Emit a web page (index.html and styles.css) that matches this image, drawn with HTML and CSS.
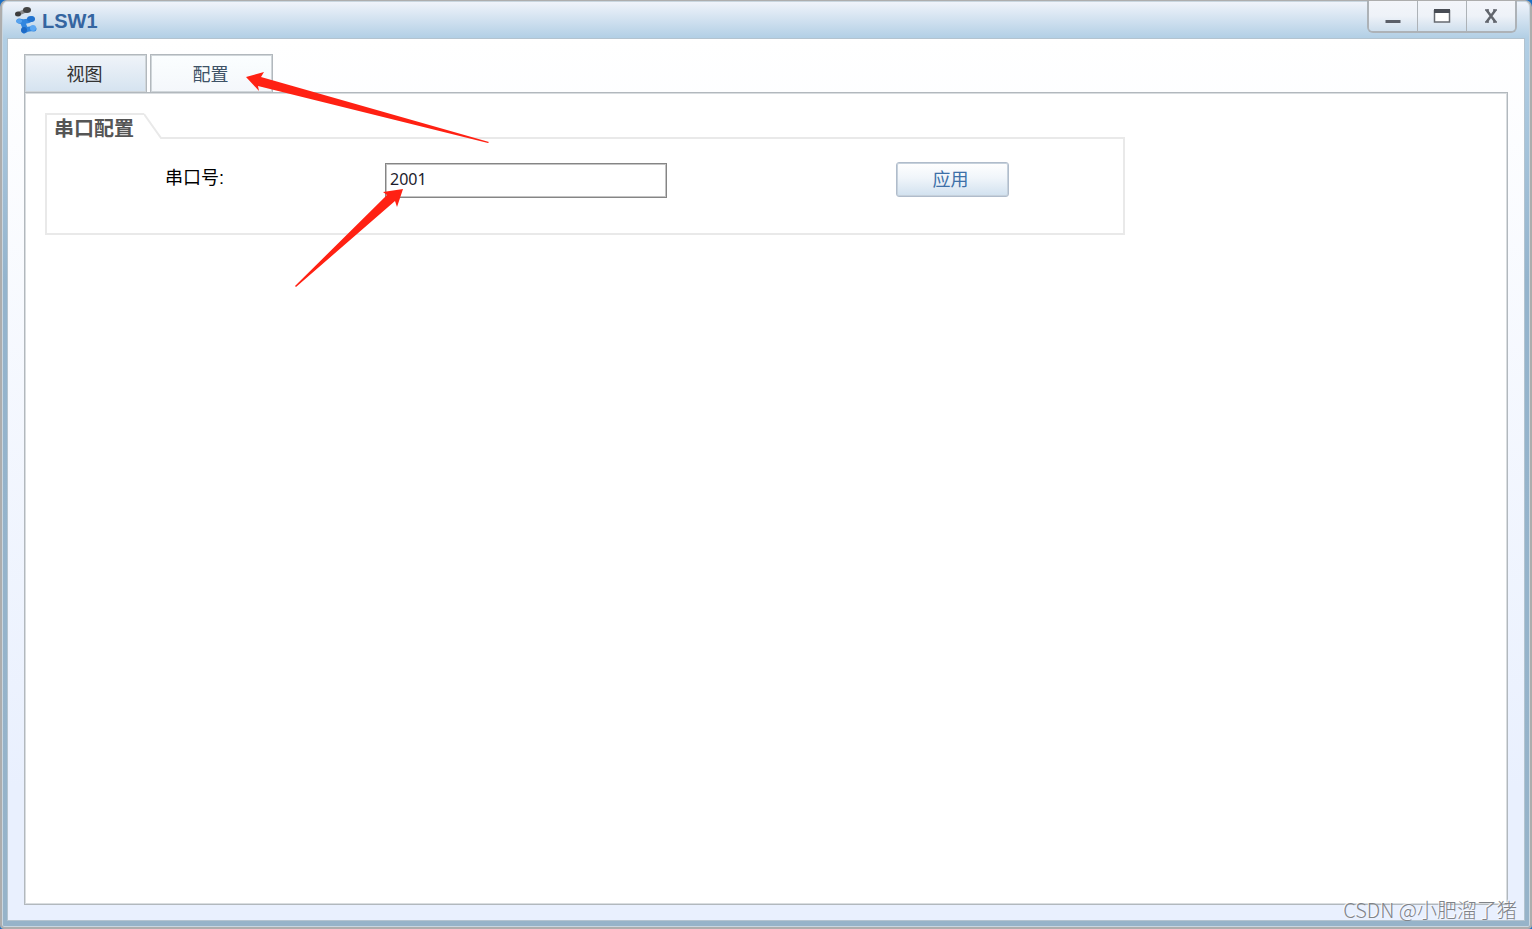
FILE: index.html
```html
<!DOCTYPE html>
<html lang="zh-CN">
<head>
    <meta charset="UTF-8">
    <meta name="viewport" content="width=device-width, initial-scale=1.0">
    <title>LSW1</title>
    <link rel="stylesheet" href="styles.css">
</head>
<body>
    <div class="window">
        <header class="titlebar">
            <svg class="logo" width="24" height="28" viewBox="0 0 24 28" aria-hidden="true">
                <path d="M3 8 L12 4" stroke="#8a8a8a" stroke-width="4"/>
                <ellipse cx="3" cy="8" rx="3" ry="2.500" fill="#3c3c3c"/>
                <ellipse cx="12" cy="4" rx="4" ry="3" fill="#444"/>
                <path d="M4 15 Q11 17 17 13 M8 17 L10 22 M9 25 Q13 22 19 23" fill="none" stroke="#3186df" stroke-width="5" stroke-linecap="round"/>
                <ellipse cx="16" cy="13" rx="4" ry="3" fill="#2273cf"/>
                <ellipse cx="4" cy="15" rx="3" ry="2" fill="#58a3ee"/>
                <circle cx="9" cy="24" r="3" fill="#1d6ac6"/>
                <ellipse cx="18" cy="22" rx="3" ry="3" fill="#5ca8f3"/>
            </svg>
            <h1>LSW1</h1>
            <div class="controls">
                <button type="button" aria-label="最小化">
                    <svg width="18" height="18" viewBox="0 0 18 18"><path d="M1.500 14.500h15" stroke="#5b5f68" stroke-width="3"/></svg>
                </button>
                <button type="button" aria-label="最大化">
                    <svg width="18" height="18" viewBox="0 0 18 18"><path d="M1.500 3v12h15V3" fill="#fff" stroke="#666a70" stroke-width="1.500"/><path d="M1 4h16" stroke="#484c54" stroke-width="4"/></svg>
                </button>
                <button type="button" aria-label="关闭">
                    <svg width="18" height="18" viewBox="0 0 18 18"><path d="M4.500 3l9 12M13.500 3l-9 12" stroke="#62666d" stroke-width="2.500"/><path d="M3 3h4M11 3h4M3 15h4M11 15h4" stroke="#62666d" stroke-width="1.500"/></svg>
                </button>
            </div>
        </header>

        <main class="content">
            <nav class="tabs">
                <button type="button" class="tab">视图</button>
                <button type="button" class="tab active">配置</button>
            </nav>
            <div class="panel">
                <section class="group">
                    <div class="group-head">
                        <h2>串口配置</h2>
                        <svg class="slope" width="18" height="26" viewBox="0 0 18 26"><path d="M0 1 L17 25 H18" fill="none" stroke="#e9e9e9" stroke-width="2"/></svg>
                        <span class="group-line"></span>
                    </div>
                    <form class="row">
                        <label for="port">串口号:</label>
                        <input type="text" id="port" name="port" value="2001">
                        <button type="button" class="apply">应用</button>
                    </form>
                </section>
            </div>
        </main>
    </div>

    <!-- red pointer arrows -->
    <svg class="arrows" width="500" height="300" viewBox="0 0 500 300" aria-hidden="true">
        <path d="M246 77 L264 72 L261 77 L489 142 L488 143 L258 86 L259 91 Z"/>
        <path d="M403 189 L397 207 L395 201 L296 287 L295 286 L387 195 L383 192 Z"/>
    </svg>
    <div class="watermark">CSDN @小肥溜了猪</div>
</body>
</html>
```
FILE: styles.css
```css
* {
    box-sizing: border-box;
}
body {
    margin: 0;
    background: #1c6fc4;
    font-family: "Liberation Sans", "Noto Sans CJK SC", sans-serif;
    font-size: 18px;
    color: #000;
}
button, input {
    font-family: inherit;
    font-size: inherit;
}
.window {
    display: flex;
    flex-direction: column;
    height: 100vh;
    padding: 0 5px 6px;
    border: 2px solid #adadad;
    border-top-width: 1px;
    border-radius: 7px 7px 4px 4px;
    background: linear-gradient(#f1f4fb, #b2cfe5 37px, #94b4cd 280px, #96b3c9);
    box-shadow: inset 0 0 0 1px #c9d6e0;
}
.titlebar {
    display: flex;
    align-items: flex-start;
    height: 37px;
    padding: 0 8px;
}
.logo {
    margin-top: 5px;
    overflow: visible;
}
h1 {
    flex: 1;
    margin: 8px 0 0 3px;
    font-size: 20px;
    line-height: 24px;
    color: #3465a0;
}
.controls {
    display: flex;
    border: 2px solid #adb2b7;
    border-top: none;
    border-radius: 0 0 6px 6px;
    overflow: hidden;
}
.controls button {
    display: flex;
    align-items: center;
    justify-content: center;
    width: 49px;
    height: 30px;
    padding: 0;
    border: none;
    border-right: 1px solid #adb2b7;
    background: linear-gradient(#f3f5fa, #eef2f8 50%, #cfdfed);
}
.controls button:last-child {
    width: 48px;
    border-right: none;
}
.content {
    flex: 1;
    display: flex;
    flex-direction: column;
    padding: 15px 16px;
    border: 1px solid #b3c3cf;
    background: linear-gradient(#fff, #e9f0fe 85%);
}
.tabs {
    display: flex;
    gap: 3px;
}
.tab {
    width: 123px;
    height: 38px;
    padding: 0 2px 2px 0;
    border: 1px solid #b2b8bd;
    border-bottom: none;
    background: linear-gradient(#f0f4f9, #d5e3f0);
    box-shadow: inset 0 0 0 1px #d0d6da;
    color: #333;
}
.tab.active {
    background: linear-gradient(#fbfeff, #f4f7fb);
    color: #3e5266;
}
.panel {
    flex: 1;
    padding: 20px;
    border: 1px solid #b2b8bd;
    background: #fff;
    box-shadow: inset 0 0 0 1px #d9dde0;
}
.group {
    max-width: 1080px;
}
.group-head {
    display: flex;
    align-items: flex-end;
}
h2 {
    width: 99px;
    height: 26px;
    margin: 0;
    padding-left: 7px;
    border-top: 2px solid #e9e9e9;
    border-left: 2px solid #e9e9e9;
    font-size: 20px;
    line-height: 28px;
    color: #555;
}
.group-line {
    flex: 1;
    border-top: 2px solid #e9e9e9;
}
.row {
    display: flex;
    height: 96px;
    padding: 23px 0 0 118px;
    border: 2px solid #e9e9e9;
    border-top: none;
}
.row label {
    width: 220px;
    line-height: 32px;
}
.row input {
    width: 282px;
    height: 35px;
    margin: 1px 229px 0 0;
    padding: 0 4px 4px;
    border: 1px solid #858585;
    border-radius: 0;
    background: #fff;
    box-shadow: inset 0 0 0 1px #c4c4c4;
    color: #1c1c2c;
    font-family: "Noto Sans", sans-serif;
    font-size: 16px;
}
.apply {
    width: 113px;
    height: 35px;
    padding: 0 4px 4px 0;
    border: 1px solid #b0bccb;
    border-radius: 3px;
    background: linear-gradient(#fff, #f0f5fa 45%, #d1e1ef);
    box-shadow: inset 0 0 0 1px #c6d1dc;
    color: #3d70a8;
}
.arrows {
    position: absolute;
    top: 0;
    left: 0;
    pointer-events: none;
    fill: #ff2113;
}
.watermark {
    position: absolute;
    right: 15px;
    bottom: 4px;
    font-family: "Noto Sans CJK SC", sans-serif;
    font-size: 20px;
    font-weight: 300;
    line-height: 30px;
    color: #808388;
    text-shadow: -1px -1px 0 rgba(255, 255, 255, 0.8);
}
```
